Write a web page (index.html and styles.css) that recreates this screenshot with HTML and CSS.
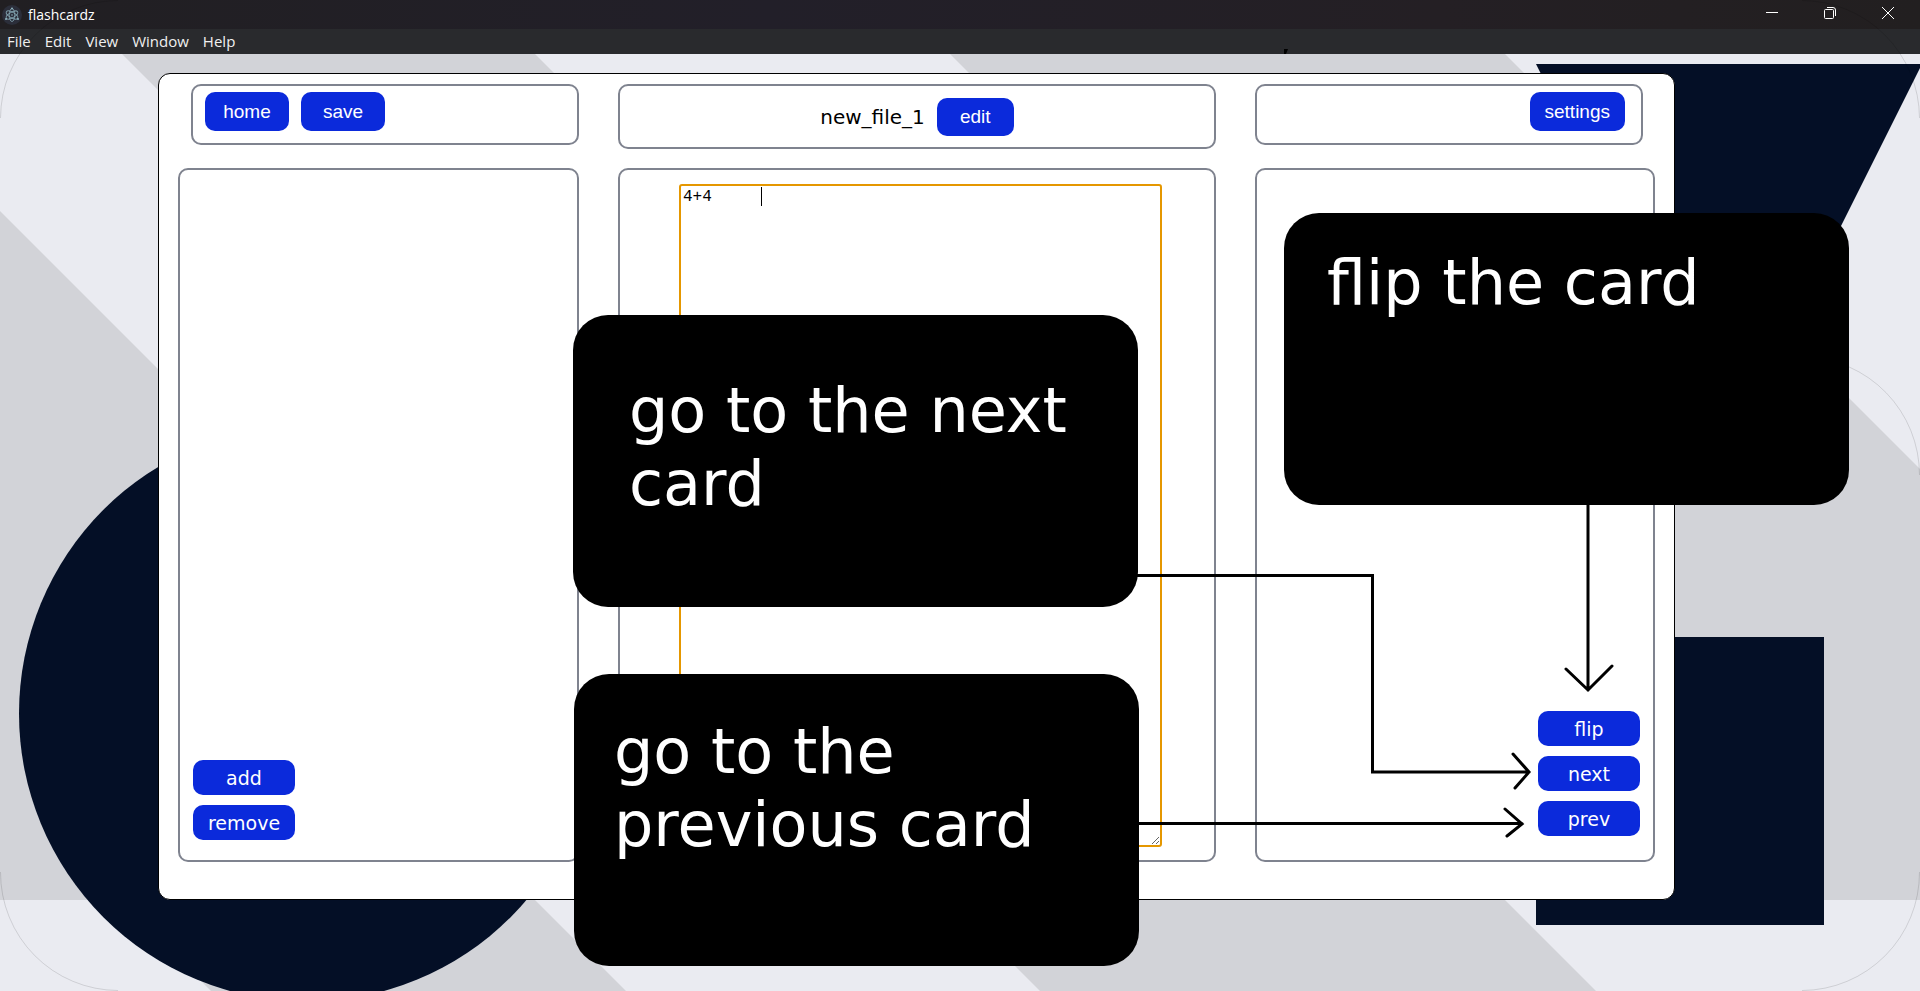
FILE: index.html
```html
<!DOCTYPE html>
<html lang="en">
<head>
<meta charset="utf-8">
<title>flashcardz</title>
<link rel="stylesheet" href="styles.css">
</head>
<body>
<svg class="backdrop" viewBox="0 0 1920 991" preserveAspectRatio="none" aria-hidden="true">
  <rect width="1920" height="991" fill="#eaebf1"/>
  <g fill="#d2d3d8">
    <path d="M122 54H535L1381 900H968Z"/>
    <path d="M950 54H1505L1920 469V900H1796Z"/>
    <path d="M0 211L689 900H0Z"/>
    <path d="M120 900H535L626 991H211Z"/>
    <path d="M949 900H1505L1596 991H1040Z"/>
  </g>
  <g fill="#040f26">
    <circle cx="307" cy="713.5" r="288"/>
    <path d="M1536 64H1922L1729 450Z"/>
    <rect x="1536" y="637" width="288" height="288"/>
  </g>
</svg>

<header class="titlebar">
  <svg class="app-icon" viewBox="0 0 20 20" aria-hidden="true">
    <circle cx="10" cy="10" r="10" fill="#2b2e3a"/>
    <g fill="none" stroke="#8fb4c0" stroke-opacity=".8" stroke-width=".9">
      <ellipse cx="10" cy="10" rx="6.500" ry="2.800" transform="rotate(30 10 10)"/>
      <ellipse cx="10" cy="10" rx="6.500" ry="2.800" transform="rotate(90 10 10)"/>
      <ellipse cx="10" cy="10" rx="6.500" ry="2.800" transform="rotate(150 10 10)"/>
    </g>
    <g fill="#8fb4c0">
      <circle cx="10" cy="10" r=".8"/>
      <circle cx="4" cy="14" r="1"/>
      <circle cx="16" cy="14" r="1"/>
      <circle cx="10" cy="3.500" r="1"/>
    </g>
  </svg>
  <span class="title">flashcardz</span>
  <div class="window-controls">
    <button type="button" aria-label="Minimize"><svg viewBox="0 0 14 14"><path d="M1 6.500H13"/></svg></button>
    <button type="button" aria-label="Restore"><svg viewBox="0 0 14 14"><rect x="1.500" y="3.500" width="9" height="9" rx="1"/><path d="M4 1.500H10Q12.500 1.500 12.500 4V10"/></svg></button>
    <button type="button" aria-label="Close"><svg viewBox="0 0 14 14"><path d="M1 1L13 13M13 1L1 13"/></svg></button>
  </div>
</header>
<nav class="menubar">
  <a href="#file">File</a>
  <a href="#edit">Edit</a>
  <a href="#view">View</a>
  <a href="#window">Window</a>
  <a href="#help">Help</a>
</nav>

<main class="app">
  <div class="column column-left">
    <div class="toolbar">
      <button class="btn" type="button">home</button>
      <button class="btn" type="button">save</button>
    </div>
    <section class="panel">
      <button class="btn btn-small" type="button">add</button>
      <button class="btn btn-small" type="button">remove</button>
    </section>
  </div>
  <div class="column column-middle">
    <div class="toolbar toolbar-title">
      <span class="filename">new_file_1</span>
      <button class="btn btn-edit" type="button">edit</button>
    </div>
    <section class="panel panel-editor">
      <textarea class="card-text" aria-label="Card text" spellcheck="false">4+4	</textarea>
      <span class="caret"></span>
    </section>
  </div>
  <div class="column column-right">
    <div class="toolbar toolbar-end">
      <button class="btn" type="button">settings</button>
    </div>
    <section class="panel panel-end">
      <button class="btn btn-small" type="button">flip</button>
      <button class="btn btn-small" type="button">next</button>
      <button class="btn btn-small" type="button">prev</button>
    </section>
  </div>
</main>

<div class="annotations">
  <svg class="arrows" viewBox="0 0 1920 991" preserveAspectRatio="none" aria-hidden="true">
    <g fill="none" stroke="#000" stroke-width="3" stroke-linecap="round">
      <path d="M1130 575.500H1372.500V772H1529M1513 754L1529 772L1515 788"/>
      <path d="M1130 823.500H1522M1505 809L1522 824L1507 836"/>
      <path d="M1588 500V690M1566 669L1588 690L1612 666"/>
    </g>
    <path d="M1284 49H1288L1286 54H1284Z" fill="#000"/>
    <g fill="none" stroke="#000" stroke-opacity=".12">
      <path d="M.5 118A118 118 0 0 1 118 .5"/>
      <path d="M1802 .5A118 118 0 0 1 1919.500 118"/>
      <path d="M1919.500 872A118 118 0 0 1 1802 990.500"/>
      <path d="M118 990.500A118 118 0 0 1 .5 872"/>
      <path d="M1805 357A118 118 0 0 1 1919.500 475"/>
    </g>
  </svg>
  <p class="callout callout-flip">flip the card</p>
  <p class="callout callout-next">go to the next card</p>
  <p class="callout callout-prev">go to the previous card</p>
</div>
</body>
</html>
```
FILE: styles.css
```css
* {
  box-sizing: border-box;
}

body {
  margin: 0;
  min-height: 100vh;
  display: flex;
  flex-direction: column;
  position: relative;
  overflow: hidden;
  font-family: "DejaVu Sans", sans-serif;
  color: #000;
}

.backdrop,
.annotations,
.arrows {
  position: absolute;
  inset: 0;
  width: 100%;
  height: 100%;
}

.backdrop {
  z-index: -1;
}

.annotations {
  pointer-events: none;
}

.titlebar {
  display: flex;
  align-items: center;
  gap: 6px;
  height: 29px;
  padding: 0 3px 0 2px;
  background: linear-gradient(90deg, #211f22, #221f29 40%, #241f24 75%, #221f20);
  color: #fff;
  font: 14px/28px "Open Sans", sans-serif;
}

.app-icon {
  width: 20px;
  height: 20px;
}

.window-controls {
  margin-left: auto;
  display: flex;
}

.window-controls button {
  width: 58px;
  height: 29px;
  padding: 0;
  border: 0;
  background: none;
}

.window-controls svg {
  width: 14px;
  height: 14px;
  fill: none;
  stroke: #fff;
}

.menubar {
  display: flex;
  gap: 14px;
  height: 25px;
  padding-left: 7px;
  background: #292a2d;
  font: 15px/24px "Open Sans", sans-serif;
}

.menubar a {
  color: #f0f0f0;
  text-decoration: none;
}

.app {
  flex: 1;
  display: grid;
  grid-template-columns: 401fr 598fr 400fr;
  column-gap: 39px;
  margin: 19px 245px 91px 158px;
  padding: 10px 19px 37px;
  background: #fff;
  border: 1px solid #000;
  border-radius: 12px;
}

.column {
  display: grid;
  grid-template-rows: 65px 1fr;
  row-gap: 19px;
}

.toolbar,
.panel {
  display: flex;
  border: 2px solid #7f838f;
  border-radius: 10px;
}

.toolbar {
  gap: 12px;
  height: 61px;
  padding: 6px 12px;
}

.column-left .toolbar {
  margin-left: 13px;
}

.toolbar-title {
  height: 65px;
  align-items: center;
  justify-content: center;
}

.toolbar-end {
  justify-content: flex-end;
  margin-right: 12px;
  padding-right: 16px;
}

.panel {
  flex-direction: column;
  justify-content: flex-end;
  gap: 10px;
  padding: 14px 13px 20px;
}

.panel-end {
  align-items: flex-end;
  padding-bottom: 24px;
}

.panel-editor {
  position: relative;
  justify-content: flex-start;
  padding: 14px 52px 13px 59px;
}

.btn {
  height: 39px;
  min-width: 84px;
  padding: 0 15px;
  border: 0;
  border-radius: 10px;
  background: #0b2adb;
  color: #fff;
  font: 19px "Liberation Sans", sans-serif;
}

.btn-edit {
  height: 38px;
  min-width: 77px;
}

.btn-small {
  width: 102px;
  height: 35px;
  padding: 0;
  font-family: "DejaVu Sans", sans-serif;
}

.filename {
  font-size: 20px;
}

.card-text {
  flex: 1;
  width: 100%;
  padding: 2px;
  border: 2px solid #e59700;
  border-radius: 3px;
  outline: 0;
  resize: both;
  font: 16px/18px "Liberation Mono", monospace;
}

.caret {
  position: absolute;
  left: 141px;
  top: 17px;
  width: 1px;
  height: 19px;
  background: #000;
}

.callout {
  position: absolute;
  width: 565px;
  height: 292px;
  margin: 0;
  border-radius: 35px;
  background: #000;
  color: #fff;
  font-size: 62px;
  line-height: 73px;
}

.callout-flip {
  left: 1284px;
  top: 213px;
  padding: 33px 43px;
}

.callout-next {
  left: 573px;
  top: 315px;
  padding: 59px 56px;
}

.callout-prev {
  left: 574px;
  top: 674px;
  padding: 41px 40px;
}
```
